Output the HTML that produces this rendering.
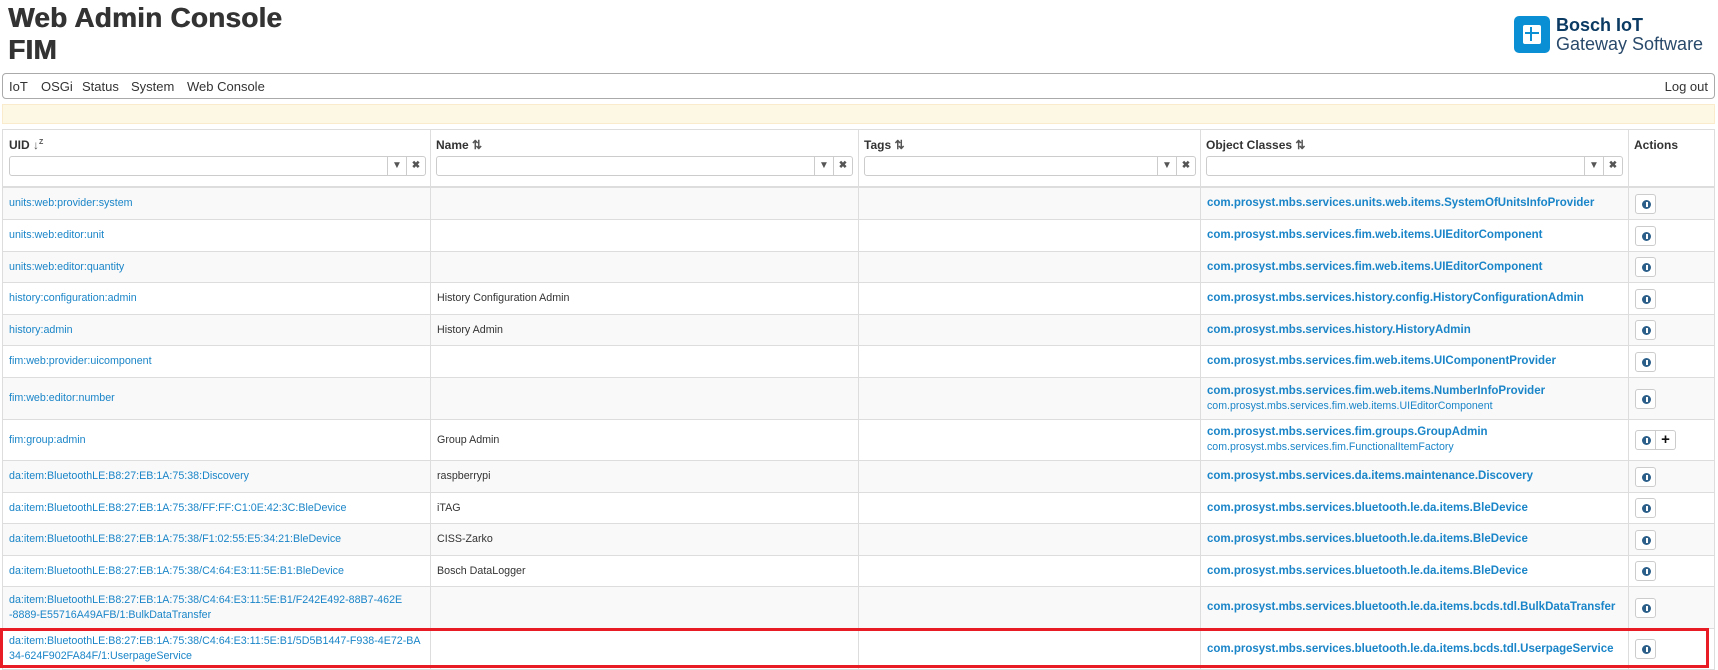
<!DOCTYPE html>
<html><head><meta charset="utf-8">
<style>
*{box-sizing:border-box;margin:0;padding:0}
body{width:1718px;height:670px;overflow:hidden;background:#fff;font-family:"Liberation Sans",Arial,sans-serif;color:#333;position:relative}
.a{position:absolute}
h1{position:absolute;left:8px;font-size:28px;font-weight:bold;color:#333;line-height:32px;letter-spacing:0.2px;text-shadow:0.6px 0 0 #333}
.nav{left:2px;top:73px;width:1713px;height:26px;border:1px solid #aaa;border-radius:4px;font-size:13px}
.nav span{position:absolute;top:5px}
.warn{left:2px;top:104px;width:1713px;height:20px;background:#fcf8e3;border:1px solid #faebcc}
.hd{top:129px;height:59px;border:1px solid #ddd;border-bottom:2px solid #ddd;font-size:12px;font-weight:bold}
.hd b{position:absolute;left:6px;top:8px}
.hd b em{font-style:normal;color:#555}
.flt{position:absolute;left:6px;top:26px;height:20px;border:1px solid #ccc;border-radius:3px;background:#fff}
.flt i{position:absolute;top:0;width:19px;height:18px;border-left:1px solid #ccc;font-style:normal;font-size:10px;color:#555;text-align:center;line-height:18px}
.row{position:absolute;left:2px;width:1713px;border-bottom:1px solid #ddd;font-size:10.7px}
.row.g{background:#f9f9f9}
.c{position:absolute;top:0;bottom:0;border-left:1px solid #ddd;display:flex;flex-direction:column;justify-content:center;padding-left:6px;line-height:15px;white-space:nowrap}
.uid{color:#1a85c8}
.oc{color:#1a85c8}
.oc b{font-weight:bold;font-size:11.5px}
.oc s{text-decoration:none;font-size:10.6px}
.btn{display:inline-block;width:21px;height:20px;border:1px solid #ccc;border-radius:3px;background:#fff;position:relative;vertical-align:middle}
.btn:after{content:"";position:absolute;left:6px;top:5px;width:9px;height:9px;border-radius:50%;background:#2b5f8a}
.btn:before{content:"";position:absolute;left:10px;top:7px;width:1.5px;height:5px;background:#fff;z-index:2}
.pl{display:inline-block;width:20px;height:20px;border:1px solid #ccc;border-left:none;border-radius:0 3px 3px 0;background:#fff;vertical-align:middle;text-align:center;font-weight:bold;font-size:15px;line-height:17px;color:#111}
</style></head><body>
<h1 style="top:2px">Web Admin Console</h1>
<h1 style="top:34px">FIM</h1>
<div class="a" style="left:1514px;top:16px;width:36px;height:37px;background:#0a8fd4;border-radius:5px">
 <div class="a" style="left:9px;top:9px;width:18px;height:19px;background:#fff;border-radius:2px">
  <div class="a" style="left:2px;top:7px;width:14px;height:1.5px;background:#0a8fd4"></div>
  <div class="a" style="left:7px;top:2px;width:1.5px;height:14px;background:#0a8fd4"></div>
 </div>
</div>
<div class="a" style="left:1556px;top:15px;font-size:18px;font-weight:bold;color:#0b3a63;line-height:20px">Bosch IoT</div>
<div class="a" style="left:1556px;top:34px;font-size:18px;color:#2a4a6b;line-height:20px">Gateway Software</div>

<div class="a nav">
<span style="left:6px">IoT</span><span style="left:38px">OSGi</span><span style="left:79px">Status</span><span style="left:128px">System</span><span style="left:184px">Web Console</span>
<span style="right:6px">Log out</span>
</div>
<div class="a warn"></div>

<div class="a hd" style="left:2px;width:429px"><b>UID <em>↓<sup style="font-size:7px">Z</sup></em></b><div class="flt" style="width:417px"><i style="right:19px">▼</i><i style="right:0">✖</i></div></div>
<div class="a hd" style="left:430px;width:429px;border-left:none"><b>Name <em>⇅</em></b><div class="flt" style="width:417px"><i style="right:19px">▼</i><i style="right:0">✖</i></div></div>
<div class="a hd" style="left:858px;width:343px;border-left:none"><b>Tags <em>⇅</em></b><div class="flt" style="width:332px"><i style="right:19px">▼</i><i style="right:0">✖</i></div></div>
<div class="a hd" style="left:1200px;width:429px;border-left:none"><b>Object Classes <em>⇅</em></b><div class="flt" style="width:417px"><i style="right:19px">▼</i><i style="right:0">✖</i></div></div>
<div class="a hd" style="left:1628px;width:87px;border-left:none"><b>Actions</b></div>

<div class="row g" style="top:188px;height:32px"><div class="c uid" style="left:0;border-left:1px solid #ddd">units:web:provider:system</div><div class="c" style="left:428px"></div><div class="c" style="left:856px"></div><div class="c oc" style="left:1198px"><b>com.prosyst.mbs.services.units.web.items.SystemOfUnitsInfoProvider</b></div><div class="c" style="left:1626px;border-right:1px solid #ddd;right:0"><span><span class="btn"></span></span></div></div>
<div class="row" style="top:220px;height:32px"><div class="c uid" style="left:0">units:web:editor:unit</div><div class="c" style="left:428px"></div><div class="c" style="left:856px"></div><div class="c oc" style="left:1198px"><b>com.prosyst.mbs.services.fim.web.items.UIEditorComponent</b></div><div class="c" style="left:1626px;right:0;border-right:1px solid #ddd"><span><span class="btn"></span></span></div></div>
<div class="row g" style="top:252px;height:31px"><div class="c uid" style="left:0">units:web:editor:quantity</div><div class="c" style="left:428px"></div><div class="c" style="left:856px"></div><div class="c oc" style="left:1198px"><b>com.prosyst.mbs.services.fim.web.items.UIEditorComponent</b></div><div class="c" style="left:1626px;right:0;border-right:1px solid #ddd"><span><span class="btn"></span></span></div></div>
<div class="row" style="top:283px;height:32px"><div class="c uid" style="left:0">history:configuration:admin</div><div class="c" style="left:428px">History Configuration Admin</div><div class="c" style="left:856px"></div><div class="c oc" style="left:1198px"><b>com.prosyst.mbs.services.history.config.HistoryConfigurationAdmin</b></div><div class="c" style="left:1626px;right:0;border-right:1px solid #ddd"><span><span class="btn"></span></span></div></div>
<div class="row g" style="top:315px;height:31px"><div class="c uid" style="left:0">history:admin</div><div class="c" style="left:428px">History Admin</div><div class="c" style="left:856px"></div><div class="c oc" style="left:1198px"><b>com.prosyst.mbs.services.history.HistoryAdmin</b></div><div class="c" style="left:1626px;right:0;border-right:1px solid #ddd"><span><span class="btn"></span></span></div></div>
<div class="row" style="top:346px;height:32px"><div class="c uid" style="left:0">fim:web:provider:uicomponent</div><div class="c" style="left:428px"></div><div class="c" style="left:856px"></div><div class="c oc" style="left:1198px"><b>com.prosyst.mbs.services.fim.web.items.UIComponentProvider</b></div><div class="c" style="left:1626px;right:0;border-right:1px solid #ddd"><span><span class="btn"></span></span></div></div>
<div class="row g" style="top:378px;height:42px"><div class="c uid" style="left:0">fim:web:editor:number</div><div class="c" style="left:428px"></div><div class="c" style="left:856px"></div><div class="c oc" style="left:1198px"><b>com.prosyst.mbs.services.fim.web.items.NumberInfoProvider</b><s>com.prosyst.mbs.services.fim.web.items.UIEditorComponent</s></div><div class="c" style="left:1626px;right:0;border-right:1px solid #ddd"><span><span class="btn"></span></span></div></div>
<div class="row" style="top:420px;height:41px"><div class="c uid" style="left:0">fim:group:admin</div><div class="c" style="left:428px">Group Admin</div><div class="c" style="left:856px"></div><div class="c oc" style="left:1198px"><b>com.prosyst.mbs.services.fim.groups.GroupAdmin</b><s>com.prosyst.mbs.services.fim.FunctionalItemFactory</s></div><div class="c" style="left:1626px;right:0;border-right:1px solid #ddd"><span><span class="btn" style="border-radius:3px 0 0 3px"></span><span class="pl">+</span></span></div></div>
<div class="row g" style="top:461px;height:32px"><div class="c uid" style="left:0">da:item:BluetoothLE:B8:27:EB:1A:75:38:Discovery</div><div class="c" style="left:428px">raspberrypi</div><div class="c" style="left:856px"></div><div class="c oc" style="left:1198px"><b>com.prosyst.mbs.services.da.items.maintenance.Discovery</b></div><div class="c" style="left:1626px;right:0;border-right:1px solid #ddd"><span><span class="btn"></span></span></div></div>
<div class="row" style="top:493px;height:31px"><div class="c uid" style="left:0">da:item:BluetoothLE:B8:27:EB:1A:75:38/FF:FF:C1:0E:42:3C:BleDevice</div><div class="c" style="left:428px">iTAG</div><div class="c" style="left:856px"></div><div class="c oc" style="left:1198px"><b>com.prosyst.mbs.services.bluetooth.le.da.items.BleDevice</b></div><div class="c" style="left:1626px;right:0;border-right:1px solid #ddd"><span><span class="btn"></span></span></div></div>
<div class="row g" style="top:524px;height:32px"><div class="c uid" style="left:0">da:item:BluetoothLE:B8:27:EB:1A:75:38/F1:02:55:E5:34:21:BleDevice</div><div class="c" style="left:428px">CISS-Zarko</div><div class="c" style="left:856px"></div><div class="c oc" style="left:1198px"><b>com.prosyst.mbs.services.bluetooth.le.da.items.BleDevice</b></div><div class="c" style="left:1626px;right:0;border-right:1px solid #ddd"><span><span class="btn"></span></span></div></div>
<div class="row" style="top:556px;height:31px"><div class="c uid" style="left:0">da:item:BluetoothLE:B8:27:EB:1A:75:38/C4:64:E3:11:5E:B1:BleDevice</div><div class="c" style="left:428px">Bosch DataLogger</div><div class="c" style="left:856px"></div><div class="c oc" style="left:1198px"><b>com.prosyst.mbs.services.bluetooth.le.da.items.BleDevice</b></div><div class="c" style="left:1626px;right:0;border-right:1px solid #ddd"><span><span class="btn"></span></span></div></div>
<div class="row g" style="top:587px;height:42px"><div class="c uid" style="left:0">da:item:BluetoothLE:B8:27:EB:1A:75:38/C4:64:E3:11:5E:B1/F242E492-88B7-462E<br>-8889-E55716A49AFB/1:BulkDataTransfer</div><div class="c" style="left:428px"></div><div class="c" style="left:856px"></div><div class="c oc" style="left:1198px"><b>com.prosyst.mbs.services.bluetooth.le.da.items.bcds.tdl.BulkDataTransfer</b></div><div class="c" style="left:1626px;right:0;border-right:1px solid #ddd"><span><span class="btn"></span></span></div></div>
<div class="row" style="top:629px;height:41px"><div class="c uid" style="left:0">da:item:BluetoothLE:B8:27:EB:1A:75:38/C4:64:E3:11:5E:B1/5D5B1447-F938-4E72-BA<br>34-624F902FA84F/1:UserpageService</div><div class="c" style="left:428px"></div><div class="c" style="left:856px"></div><div class="c oc" style="left:1198px"><b>com.prosyst.mbs.services.bluetooth.le.da.items.bcds.tdl.UserpageService</b></div><div class="c" style="left:1626px;right:0;border-right:1px solid #ddd"><span><span class="btn"></span></span></div></div>

<div class="a" style="left:0;top:628px;width:1709px;height:40px;border:3px solid #e81c24"></div>
</body></html>
